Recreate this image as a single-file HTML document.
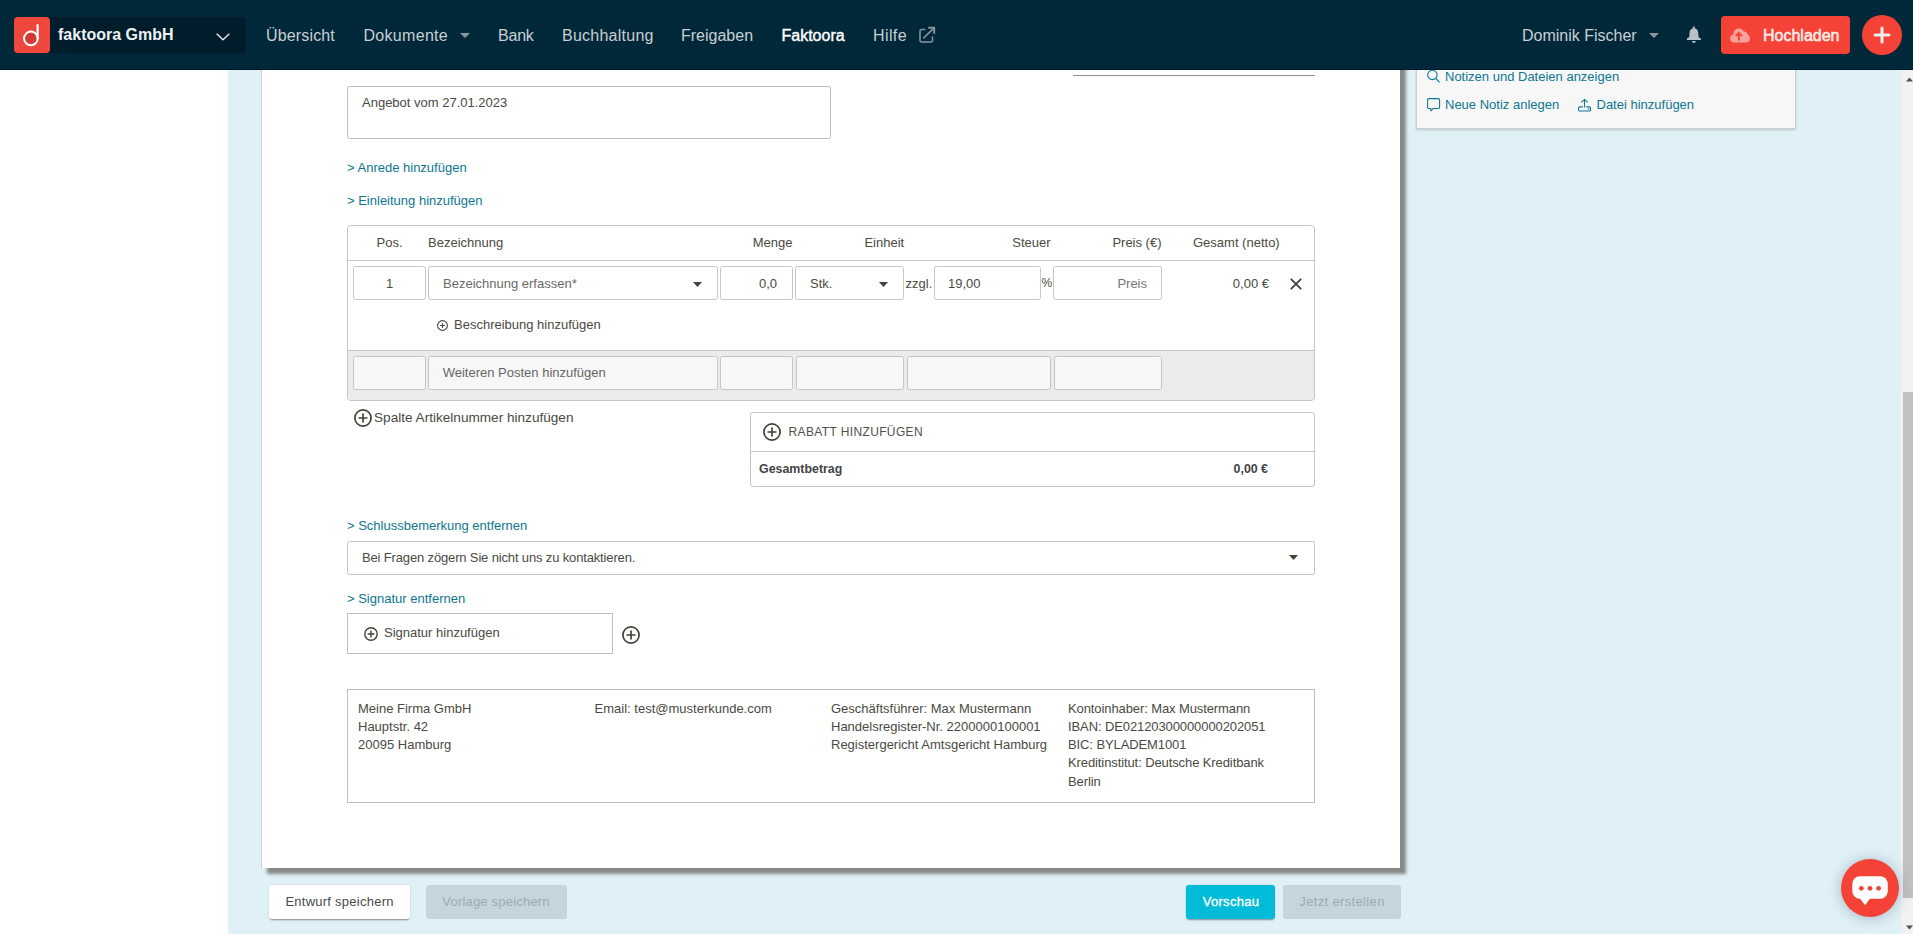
<!DOCTYPE html>
<html lang="de"><head><meta charset="utf-8"><title>faktoora</title>
<style>
*{box-sizing:border-box;margin:0;padding:0}
html,body{width:1913px;height:934px;overflow:hidden;background:#fff;font-family:"Liberation Sans",sans-serif;color:#4a4a42;font-size:13px}
.a{position:absolute}
.t{position:absolute;white-space:nowrap;line-height:20px;font-size:13px}
.r{text-align:right}
.tl{color:#0e7690}
.inp{position:absolute;border:1px solid #c6c6c6;border-radius:2.5px;background:#fff}
.g .inp{background:#f7f7f7}
svg{position:absolute;overflow:visible}
</style></head><body>

<!-- content background -->
<div class="a" style="left:228px;top:70px;width:1673px;height:864px;background:#e0f0f7"></div>

<!-- paper -->
<div class="a" style="left:261px;top:40px;width:1139px;height:828px;background:#fff;border-left:1px solid #cfcfcf;box-shadow:6px 6px 3px #888"></div>

<!-- line at top right of paper -->
<div class="a" style="left:1073px;top:75px;width:242px;height:1px;background:#909090"></div>

<!-- title textarea -->
<div class="inp" style="left:347px;top:86px;width:484px;height:53px;border-color:#bdbdbd"></div>
<div class="t" style="left:362px;top:92.5px">Angebot vom 27.01.2023</div>

<div class="t tl" style="left:347px;top:157.5px">&gt; Anrede hinzufügen</div>
<div class="t tl" style="left:347px;top:190.5px">&gt; Einleitung hinzufügen</div>

<!-- table -->
<div class="a" style="left:347px;top:225px;width:968px;height:176px;border:1px solid #c4c4c4;border-radius:4px;overflow:hidden">
  <div class="a" style="left:0;top:34px;width:966px;height:1px;background:#c8c8c8"></div>
  <div class="a" style="left:0;top:124px;width:966px;height:52px;background:#ebebeb;border-top:1px solid #c8c8c8"></div>
</div>
<div class="t" style="left:376.6px;top:233px">Pos.</div>
<div class="t" style="left:428px;top:233px">Bezeichnung</div>
<div class="t r" style="left:692px;width:100.5px;top:233px">Menge</div>
<div class="t" style="left:864.4px;top:233px">Einheit</div>
<div class="t r" style="left:950px;width:100.6px;top:233px">Steuer</div>
<div class="t r" style="left:1061px;width:100.5px;top:233px">Preis (€)</div>
<div class="t" style="left:1193px;top:233px">Gesamt (netto)</div>

<!-- row 1 -->
<div class="inp" style="left:353px;top:266px;width:73px;height:34px"></div>
<div class="t" style="left:353px;width:73px;text-align:center;top:273.5px">1</div>
<div class="inp" style="left:428px;top:266px;width:290px;height:34px"></div>
<div class="t" style="left:443px;top:273.5px;color:#6a6a6a">Bezeichnung erfassen*</div>
<svg style="left:693px;top:282px" width="9" height="5"><path d="M0 0H9L4.5 5Z" fill="#3e4436"/></svg>
<div class="inp" style="left:720px;top:266px;width:73px;height:34px"></div>
<div class="t r" style="left:720px;width:57px;top:273.5px">0,0</div>
<div class="inp" style="left:795px;top:266px;width:109px;height:34px"></div>
<div class="t" style="left:810px;top:273.5px">Stk.</div>
<svg style="left:879px;top:282px" width="9" height="5"><path d="M0 0H9L4.5 5Z" fill="#3e4436"/></svg>
<div class="t" style="left:905.6px;top:273.5px">zzgl.</div>
<div class="inp" style="left:933.5px;top:266px;width:107px;height:34px"></div>
<div class="t" style="left:948px;top:273.5px">19,00</div>
<div class="t" style="left:1041.5px;top:273.3px;font-size:12px;letter-spacing:-0.5px">%</div>
<div class="inp" style="left:1053px;top:266px;width:109px;height:34px"></div>
<div class="t r" style="left:1053px;width:94px;top:273.5px;color:#777">Preis</div>
<div class="t r" style="left:1168px;width:101px;top:273.5px">0,00 €</div>
<svg style="left:1290px;top:278px" width="12" height="12"><path d="M0.8 0.8L11.2 11.2M11.2 0.8L0.8 11.2" stroke="#3e4436" stroke-width="1.8"/></svg>

<!-- Beschreibung -->
<svg style="left:437px;top:320px" width="11" height="11"><circle cx="5.5" cy="5.5" r="4.9" fill="none" stroke="#444" stroke-width="1.1"/><path d="M5.5 3V8M3 5.5H8" stroke="#444" stroke-width="1.1"/></svg>
<div class="t" style="left:454px;top:314.5px">Beschreibung hinzufügen</div>

<!-- gray row -->
<div class="g">
<div class="inp" style="left:353px;top:356px;width:73px;height:34px"></div>
<div class="inp" style="left:428px;top:356px;width:290px;height:34px"></div>
<div class="inp" style="left:720px;top:356px;width:73px;height:34px"></div>
<div class="inp" style="left:795.5px;top:356px;width:108px;height:34px"></div>
<div class="inp" style="left:906.5px;top:356px;width:144px;height:34px"></div>
<div class="inp" style="left:1053.5px;top:356px;width:108px;height:34px"></div>
</div>
<div class="t" style="left:442.7px;top:362.5px;color:#666">Weiteren Posten hinzufügen</div>

<!-- Spalte Artikelnummer -->
<svg style="left:354px;top:409px" width="18" height="18"><circle cx="9" cy="9" r="8.1" fill="none" stroke="#3e4436" stroke-width="1.7"/><path d="M9 4.5V13.5M4.5 9H13.5" stroke="#3e4436" stroke-width="1.7"/></svg>
<div class="t" style="left:374px;top:408.3px;font-size:13.6px">Spalte Artikelnummer hinzufügen</div>

<!-- Rabatt box -->
<div class="a" style="left:750px;top:412px;width:565px;height:75px;border:1px solid #c4c4c4;border-radius:3px">
  <div class="a" style="left:0;top:38px;width:563px;height:1px;background:#c8c8c8"></div>
</div>
<svg style="left:763px;top:423px" width="18" height="18"><circle cx="9" cy="9" r="8.1" fill="none" stroke="#3e4436" stroke-width="1.7"/><path d="M9 4.5V13.5M4.5 9H13.5" stroke="#3e4436" stroke-width="1.7"/></svg>
<div class="t" style="left:788.5px;top:422.4px;font-size:12px;letter-spacing:0.37px;color:#50504a">RABATT HINZUFÜGEN</div>
<div class="t" style="left:759px;top:459px;font-weight:bold;font-size:12.4px;color:#444">Gesamtbetrag</div>
<div class="t r" style="left:1168px;width:100px;top:459px;font-weight:bold;font-size:12.4px;color:#444">0,00 €</div>

<div class="t tl" style="left:347px;top:515.5px">&gt; Schlussbemerkung entfernen</div>
<div class="inp" style="left:347px;top:541px;width:968px;height:34px;border-color:#c4c4c4"></div>
<div class="t" style="left:362px;top:547.5px;letter-spacing:-0.15px">Bei Fragen zögern Sie nicht uns zu kontaktieren.</div>
<svg style="left:1289px;top:555px" width="9" height="5"><path d="M0 0H9L4.5 5Z" fill="#3e4436"/></svg>

<div class="t tl" style="left:347px;top:588.5px">&gt; Signatur entfernen</div>
<div class="a" style="left:347px;top:613px;width:266px;height:41px;border:1px solid #bdbdbd"></div>
<svg style="left:364px;top:627px" width="14" height="14"><circle cx="7" cy="7" r="6.2" fill="none" stroke="#3e4436" stroke-width="1.4"/><path d="M7 3.6V10.4M3.6 7H10.4" stroke="#3e4436" stroke-width="1.4"/></svg>
<div class="t" style="left:384px;top:622.5px">Signatur hinzufügen</div>
<svg style="left:622px;top:625.5px" width="18" height="18"><circle cx="9" cy="9" r="8.1" fill="none" stroke="#3e4436" stroke-width="1.7"/><path d="M9 4.5V13.5M4.5 9H13.5" stroke="#3e4436" stroke-width="1.7"/></svg>

<!-- footer box -->
<div class="a" style="left:347px;top:689px;width:968px;height:114px;border:1px solid #bdbdbd"></div>
<div class="t" style="left:358px;top:699.5px;line-height:18.3px">Meine Firma GmbH<br>Hauptstr. 42<br>20095 Hamburg</div>
<div class="t" style="left:594.6px;top:699.5px;line-height:18.3px">Email: test@musterkunde.com</div>
<div class="t" style="left:831px;top:699.5px;line-height:18.3px">Geschäftsführer: Max Mustermann<br>Handelsregister-Nr. 2200000100001<br>Registergericht Amtsgericht Hamburg</div>
<div class="t" style="left:1068px;top:699.5px;line-height:18.3px;letter-spacing:-0.1px">Kontoinhaber: Max Mustermann<br>IBAN: DE02120300000000202051<br>BIC: BYLADEM1001<br>Kreditinstitut: Deutsche Kreditbank<br>Berlin</div>

<!-- bottom buttons -->
<div class="a" style="left:269px;top:885px;width:141px;height:34px;background:#fff;border-radius:3px;box-shadow:0 2px 2px -1px rgba(0,0,0,.4),0 0 2px rgba(0,0,0,.12)"></div>
<div class="t" style="left:285.4px;top:891.6px;letter-spacing:0.25px;color:#4a4a4a">Entwurf speichern</div>
<div class="a" style="left:426px;top:885px;width:141px;height:34px;background:#c6d5db;border-radius:3px"></div>
<div class="t" style="left:442.3px;top:891.6px;letter-spacing:0.2px;color:#9babb3">Vorlage speichern</div>
<div class="a" style="left:1186px;top:885px;width:89px;height:34px;background:#00bcd9;border-radius:3px;box-shadow:0 2px 2px -1px rgba(0,0,0,.4),0 0 2px rgba(0,0,0,.12)"></div>
<div class="t" style="left:1202.7px;top:891.6px;color:#fff;font-size:13px;letter-spacing:0.3px;-webkit-text-stroke:0.35px #fff">Vorschau</div>
<div class="a" style="left:1283px;top:885px;width:118px;height:34px;background:#c6d5db;border-radius:3px"></div>
<div class="t" style="left:1299.3px;top:891.6px;letter-spacing:0.35px;color:#9babb3">Jetzt erstellen</div>

<!-- side panel -->
<div class="a" style="left:1416px;top:30px;width:380px;height:99px;background:#f7f7f7;border:1px solid #cdcdcd;box-shadow:0 1px 2px rgba(0,0,0,.18)"></div>
<svg style="left:1427px;top:71px" width="14" height="12"><circle cx="5.4" cy="3.9" r="4.7" fill="none" stroke="#0e7690" stroke-width="1.1"/><path d="M8.7 7.3L12.6 11.4" stroke="#0e7690" stroke-width="1.2"/></svg>
<div class="t tl" style="left:1445px;top:66.5px">Notizen und Dateien anzeigen</div>
<svg style="left:1427px;top:97.5px" width="14" height="14"><path d="M1.8 0.6H11.3Q12.6 0.6 12.6 1.9V9.2Q12.6 10.4 11.3 10.4H6.3L4 12.8L3.7 10.4H1.8Q0.6 10.4 0.6 9.2V1.9Q0.6 0.6 1.8 0.6Z" fill="none" stroke="#0e7690" stroke-width="1.05" stroke-linejoin="round"/></svg>
<div class="t tl" style="left:1445px;top:94.5px">Neue Notiz anlegen</div>
<svg style="left:1578px;top:98.5px" width="14" height="13"><path d="M6.5 0.8V8.6M3.3 3.4L6.5 0.4L9.7 3.4" fill="none" stroke="#0e7690" stroke-width="1.1"/><path d="M4.8 7.9H1.7Q0.6 7.9 0.6 9V10.9Q0.6 12 1.7 12H11.4Q12.5 12 12.5 10.9V9Q12.5 7.9 11.4 7.9H8.2" fill="none" stroke="#0e7690" stroke-width="1.1"/><circle cx="10.5" cy="10" r="0.75" fill="#0e7690"/></svg>
<div class="t tl" style="left:1596.5px;top:94.5px">Datei hinzufügen</div>

<!-- scrollbar -->
<div class="a" style="left:1901px;top:70px;width:12px;height:864px;background:#f1f1f1"></div>
<div class="a" style="left:1903px;top:391.5px;width:10px;height:506.5px;background:#c1c1c1"></div>
<svg style="left:1905px;top:77px" width="9" height="5"><path d="M1 4.5L4.5 0.5L8 4.5Z" fill="#505050"/></svg>
<svg style="left:1905px;top:925px" width="9" height="5"><path d="M1 0.5H8L4.5 4.5Z" fill="#505050"/></svg>

<!-- chat -->
<div class="a" style="left:1841px;top:859px;width:58px;height:58px;border-radius:50%;background:#f44336;box-shadow:0 1px 14px rgba(0,40,60,.28)"></div>
<svg style="left:1852px;top:875.5px" width="36" height="30"><rect x="0.3" y="0.2" width="35.5" height="22.6" rx="7.5" fill="#fff"/><path d="M7.6 22H18.4L13.1 29.2Z" fill="#fff"/><circle cx="9.3" cy="12.3" r="2.4" fill="#f44336"/><circle cx="18" cy="12.3" r="2.4" fill="#f44336"/><circle cx="26.6" cy="12.3" r="2.4" fill="#f44336"/></svg>

<!-- header -->
<div class="a" style="left:0;top:0;width:1913px;height:70px;background:#012838;border-bottom:1px solid #001a2b">
  <div class="a" style="left:14px;top:17px;width:232px;height:36px;background:#011c2a;border-radius:5px"></div>
  <div class="a" style="left:14px;top:17px;width:36px;height:36px;background:#ee473d;border-radius:4px"></div>
  <svg style="left:22px;top:24px" width="20" height="23"><circle cx="8.9" cy="14.4" r="6.8" fill="#d23a33" stroke="#fff" stroke-width="2"/><path d="M15.6 1.2V14.6" stroke="#fff" stroke-width="2.2" stroke-linecap="round"/></svg>
  <div class="t" style="left:58px;top:24.5px;font-size:16px;font-weight:bold;color:#eef1f3">faktoora GmbH</div>
  <svg style="left:216px;top:33px" width="14" height="8"><path d="M0.7 0.7L7 6.8L13.3 0.7" fill="none" stroke="#e5e8ea" stroke-width="1.4"/></svg>
  <div class="t" style="left:266px;top:25.5px;font-size:16px;letter-spacing:0.15px;color:#c7cfd4">Übersicht</div>
  <div class="t" style="left:363.5px;top:25.5px;font-size:16px;letter-spacing:0.3px;color:#c7cfd4">Dokumente</div>
  <svg style="left:459.5px;top:33px" width="10" height="5"><path d="M0 0H10L5 5Z" fill="#8a969d"/></svg>
  <div class="t" style="left:498px;top:25.5px;font-size:16px;letter-spacing:-0.2px;color:#c7cfd4">Bank</div>
  <div class="t" style="left:562px;top:25.5px;font-size:16px;letter-spacing:0.25px;color:#c7cfd4">Buchhaltung</div>
  <div class="t" style="left:681px;top:25.5px;font-size:16px;letter-spacing:0;color:#c7cfd4">Freigaben</div>
  <div class="t" style="left:781.5px;top:25.5px;font-size:16px;color:#fff;-webkit-text-stroke:0.4px #fff">Faktoora</div>
  <div class="t" style="left:873px;top:25.5px;font-size:16px;letter-spacing:0.4px;color:#c7cfd4">Hilfe</div>
  <svg style="left:919px;top:27px" width="16" height="16"><path d="M6.3 2.6H2.6Q1 2.6 1 4.2V13.4Q1 15 2.6 15H11.9Q13.5 15 13.5 13.4V9.5" fill="none" stroke="#8a969d" stroke-width="1.5"/><path d="M9.2 0.8H15.2V6.8" fill="none" stroke="#8a969d" stroke-width="1.9"/><path d="M14.6 1.4L4.3 11.4" fill="none" stroke="#8a969d" stroke-width="1.5"/></svg>
  <div class="t" style="left:1522px;top:25.5px;font-size:16px;letter-spacing:0;color:#c7cfd4">Dominik Fischer</div>
  <svg style="left:1649px;top:33px" width="10" height="5"><path d="M0 0H10L5 5Z" fill="#8a969d"/></svg>
  <svg style="left:1686px;top:26.4px" width="16" height="18"><circle cx="7.9" cy="1.7" r="1.15" fill="#b9c1c6"/><path d="M7.9 2.3C10.9 2.3 12.2 4.6 12.3 7.6L12.6 11.2L14.9 12.4V14H0.9V12.4L3.2 11.2L3.5 7.6C3.6 4.6 4.9 2.3 7.9 2.3Z" fill="#b9c1c6"/><path d="M5.9 15H9.9Q9.6 17.1 7.9 17.1Q6.2 17.1 5.9 15Z" fill="#b9c1c6"/></svg>
  <div class="a" style="left:1721px;top:16px;width:129px;height:38px;background:#f44336;border-radius:4px"></div>
  <svg style="left:1730px;top:27.5px" width="21" height="15"><path d="M4.2 14.5Q0.2 14.5 0.2 10.6Q0.2 7.2 3.4 6.6Q3.6 0.4 8.7 0.4Q12.4 0.4 13.8 3.4Q17 3.2 17.8 6.6Q19.9 7.6 19.9 10.6Q19.9 14.5 15.8 14.5Z" fill="#f9a19b"/><path d="M8.9 12.4V5M5.7 8.2L8.9 4.8L12.1 8.2" fill="none" stroke="#f44336" stroke-width="1.9"/></svg>
  <div class="t" style="left:1763px;top:25.5px;font-size:16px;color:#fbecea;-webkit-text-stroke:0.55px #fbecea">Hochladen</div>
  <div class="a" style="left:1862px;top:15px;width:40px;height:39.5px;border-radius:50%;background:#f44336"></div>
  <svg style="left:1874px;top:27px" width="16" height="16"><path d="M8 1V15M1 8H15" stroke="#eee" stroke-width="3" stroke-linecap="round"/></svg>
</div>

</body></html>
